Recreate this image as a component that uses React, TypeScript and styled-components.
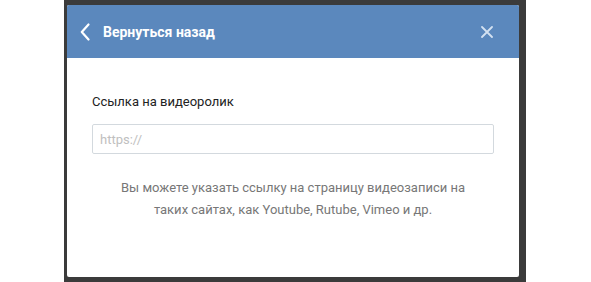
import React from "react";
import styled, { createGlobalStyle } from "styled-components";

const GlobalStyle = createGlobalStyle`
  html, body {
    margin: 0;
    padding: 0;
    background: #fff;
  }
  body {
    font-family: Roboto, "Open Sans", "Liberation Sans", sans-serif;
  }
`;

const Backdrop = styled.div`
  margin-left: 64px;
  width: 462px;
  height: 282px;
  box-sizing: border-box;
  padding: 5px 7px 0 3px;
  background: #3b3b3b;
  overflow: hidden;
`;

const Modal = styled.div`
  height: 272px;
  background: #fff;
  border-radius: 2px;
  display: flex;
  flex-direction: column;
  overflow: hidden;
`;

const Header = styled.div`
  height: 53px;
  flex-shrink: 0;
  background: #5b88bd;
  display: flex;
  align-items: center;
  padding: 0 26px 0 13px;
  color: #fff;
`;

const BackButton = styled.button`
  display: flex;
  align-items: center;
  gap: 13px;
  border: 0;
  background: none;
  padding: 0;
  color: #fff;
  font-family: inherit;
  font-size: 14px;
  font-weight: 700;
  cursor: pointer;
`;

const Spacer = styled.div`
  flex: 1;
`;

const CloseButton = styled.button`
  border: 0;
  background: none;
  padding: 0;
  display: flex;
  color: #d3e1f1;
  cursor: pointer;
`;

const Body = styled.div`
  padding: 36px 25px 0;
  display: flex;
  flex-direction: column;
`;

const Label = styled.div`
  font-size: 13px;
  line-height: 16px;
  color: #222;
`;

const Input = styled.input`
  margin-top: 14px;
  height: 30px;
  box-sizing: border-box;
  border: 1px solid #d3d9de;
  border-radius: 2px;
  padding: 0 7px;
  font-family: inherit;
  font-size: 13px;
  color: #222;
  outline: none;
  &::placeholder {
    color: #c0c0c0;
  }
`;

const Hint = styled.p`
  margin: 23px 0 0;
  text-align: center;
  font-size: 13px;
  line-height: 22px;
  color: #777;
`;

const ChevronLeft = () => (
  <svg width="10" height="18" viewBox="0 0 10 18" fill="none">
    <path d="M8.5 1.5L1.8 9l6.7 7.5" stroke="currentColor" strokeWidth="2.2" strokeLinecap="round" strokeLinejoin="round" />
  </svg>
);

const CloseIcon = () => (
  <svg width="12" height="12" viewBox="0 0 12 12" fill="none">
    <path d="M1 1l10 10M11 1L1 11" stroke="currentColor" strokeWidth="1.8" strokeLinecap="round" />
  </svg>
);

export default function App() {
  return (
    <>
      <GlobalStyle />
      <Backdrop>
        <Modal>
          <Header>
            <BackButton>
              <ChevronLeft />
              Вернуться назад
            </BackButton>
            <Spacer />
            <CloseButton aria-label="Закрыть">
              <CloseIcon />
            </CloseButton>
          </Header>
          <Body>
            <Label>Ссылка на видеоролик</Label>
            <Input placeholder="https://" />
            <Hint>
              Вы можете указать ссылку на страницу видеозаписи на
              <br />
              таких сайтах, как Youtube, Rutube, Vimeo и др.
            </Hint>
          </Body>
        </Modal>
      </Backdrop>
    </>
  );
}
